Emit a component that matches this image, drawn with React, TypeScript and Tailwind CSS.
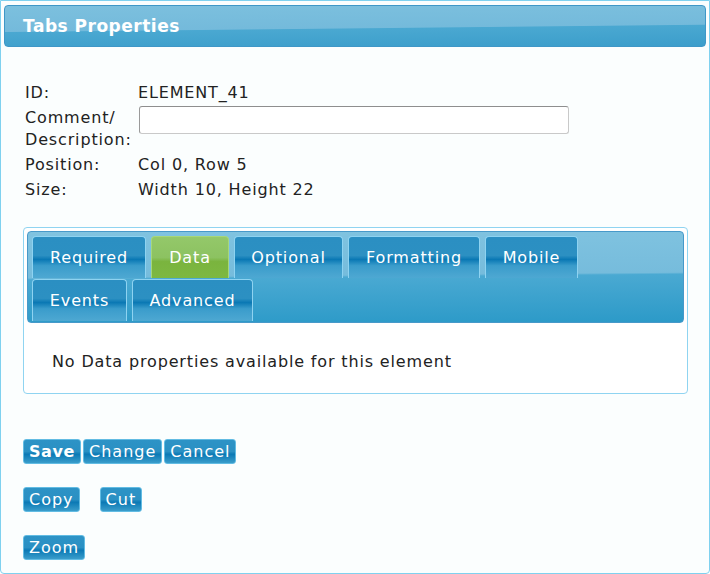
import type { ReactNode } from 'react';

const font = { fontFamily: '"DejaVu Sans", Verdana, sans-serif' };

const tabBg =
  'bg-[linear-gradient(to_bottom,#2b8fc2_0%,#2c90c2_45%,#0a78b4_55%,#3a9ccb_70%,#4ea8d2_100%)]';
const btnBg =
  'bg-[linear-gradient(to_bottom,#2d93c6_0%,#2a90c3_50%,#0b79b5_62%,#3a9dcb_100%)]';

const Row = ({ label, children }: { label: ReactNode; children: ReactNode }) => (
  <div className="flex items-start">
    <div className="w-[113px] shrink-0 leading-[22px]">{label}</div>
    <div className="leading-[22px]">{children}</div>
  </div>
);

const Tab = ({ label, active, w }: { label: string; active?: boolean; w: string }) => (
  <div
    className={`${w} h-[42px] flex items-center justify-center rounded-t-[4px] border border-b-0 text-white text-[16px] pt-[1px] ${
      active
        ? 'border-[#a6d77a] bg-[linear-gradient(to_bottom,#94c86a_0%,#8cc261_50%,#7ab43e_60%,#7db842_100%)]'
        : `border-[#8ed3f1] ${tabBg}`
    }`}
  >
    {label}
  </div>
);

const Btn = ({ label, bold }: { label: string; bold?: boolean }) => (
  <button
    className={`h-[25px] px-[5px] rounded-[3px] border border-[#62bce3] text-white text-[16px] leading-none ${btnBg} ${
      bold ? 'font-bold tracking-[0.6px]' : 'tracking-[1px]'
    }`}
    style={font}
  >
    {label}
  </button>
);

export default function App() {
  return (
    <div
      className="w-[710px] h-[574px] bg-[#fbfefe] border border-[#7fd1ef] rounded-b-[4px] text-[#222] text-[16px] tracking-[0.85px] flex flex-col"
      style={font}
    >
      {/* header */}
      <div className="mx-[3px] mt-[4px] h-[42px] rounded-[4px] border border-[#3f97c7] bg-[linear-gradient(179.4deg,#7cc0de_0%,#74badb_54%,#4aa8d1_56%,#3c9ecb_100%)] flex items-center pl-[18px]">
        <span className="text-white font-bold text-[17px] pt-[1px] tracking-[0.5px]">Tabs Properties</span>
      </div>

      {/* fields */}
      <div className="pl-[24px] pt-[35px] flex flex-col gap-[3px]">
        <Row label="ID:">ELEMENT_41</Row>
        <Row
          label={
            <>
              Comment/
              <br />
              Description:
            </>
          }
        >
          <input className="mt-[-1px] ml-[1px] w-[430px] h-[28px] rounded-[3px] border border-[#c9c9c9] border-t-[#8e8e8e] border-l-[#9a9a9a] bg-white outline-none" />
        </Row>
        <Row label="Position:">Col 0, Row 5</Row>
        <Row label="Size:">Width 10, Height 22</Row>
      </div>

      {/* tabs */}
      <div className="ml-[22px] mt-[26px] w-[665px] h-[167px] rounded-[4px] border border-[#8fd4f1] bg-white p-[3px]">
        <div className="h-[92px] rounded-[4px] border border-[#4799c9] bg-[linear-gradient(179.5deg,#80c3e0_0%,#76bcdc_48%,#4aa9d2_50%,#2c9ac8_100%)] pl-[4px] pt-[4px] flex flex-col">
          <div className="flex gap-[5px]">
            <Tab label="Required" w="w-[114px]" />
            <Tab label="Data" active w="w-[78px]" />
            <Tab label="Optional" w="w-[109px]" />
            <Tab label="Formatting" w="w-[132px]" />
            <Tab label="Mobile" w="w-[93px]" />
          </div>
          <div className="flex gap-[5px] mt-[1px]">
            <Tab label="Events" w="w-[95px]" />
            <Tab label="Advanced" w="w-[121px]" />
          </div>
        </div>
        <div className="pl-[25px] pt-[27px]">No Data properties available for this element</div>
      </div>

      {/* buttons */}
      <div className="pl-[22px] pt-[45px] flex flex-col gap-[23px]">
        <div className="flex gap-[2px]">
          <Btn label="Save" bold />
          <Btn label="Change" />
          <Btn label="Cancel" />
        </div>
        <div className="flex gap-[20px]">
          <Btn label="Copy" />
          <Btn label="Cut" />
        </div>
        <div className="flex">
          <Btn label="Zoom" />
        </div>
      </div>
    </div>
  );
}
